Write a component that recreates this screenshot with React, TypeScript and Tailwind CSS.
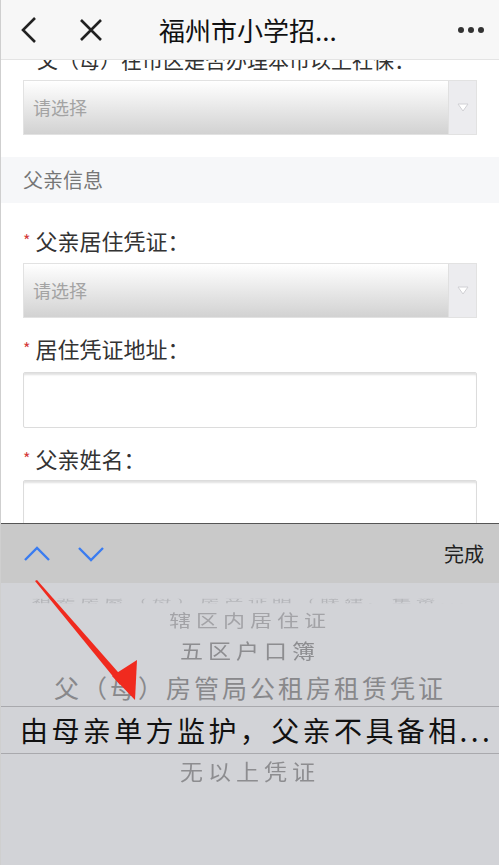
import React from "react";

const font = { fontFamily: '"Noto Sans CJK SC", "Noto Sans", sans-serif' };

function SelectBox() {
  return (
    <div className="mx-[22px] flex h-[55px] border border-[#e2e2e2]">
      <div className="flex flex-1 items-center bg-gradient-to-b from-[#ffffff] to-[#d2d2d2] pl-[9px] text-[18px] text-[#a3a3a3]">
        请选择
      </div>
      <div className="flex w-[28px] items-center justify-center border-l border-[#e0e0e0] bg-[#ececef]">
        <svg width="12" height="9" viewBox="0 0 12 9">
          <path d="M1 1 L11 1 L6 8 Z" fill="#ffffff" stroke="#d0d0d4" strokeWidth="1" />
        </svg>
      </div>
    </div>
  );
}

function InputBox() {
  return (
    <div className="mx-[22px] h-[56px] rounded-[2px] border border-[#dcdcdc] bg-white shadow-[inset_0_3px_2px_-1px_rgba(0,0,0,0.12)]" />
  );
}

function Label({ text, className }: { text: string; className?: string }) {
  return (
    <div className={`flex h-[28px] items-center px-[22px] text-[22px] text-[#333] ${className ?? ""}`}>
      <span className="mr-[5px] text-[16px] text-[#d43c3c]">*</span>
      {text}
    </div>
  );
}

export default function App() {
  return (
    <div className="relative flex h-[865px] w-[499px] flex-col overflow-hidden border-l border-[#cfcfcf] bg-white" style={font}>
      {/* header */}
      <div className="relative z-10 flex h-[60px] shrink-0 items-center border-b border-[#e4e4e4] bg-[#f7f7f7]">
        <div className="flex w-[150px] items-center gap-[40px] pl-[18px]">
          <svg width="20" height="28" viewBox="0 0 20 28">
            <path d="M16 2 L4 14 L16 26" fill="none" stroke="#222" strokeWidth="2.6" />
          </svg>
          <svg width="24" height="24" viewBox="0 0 24 24">
            <path d="M2 2 L22 22 M22 2 L2 22" fill="none" stroke="#222" strokeWidth="2.6" />
          </svg>
        </div>
        <div className="ml-[8px] flex-1 text-[26px] text-[#111]">福州市小学招...</div>
        <div className="flex gap-[4px] pr-[15px]">
          <span className="h-[6px] w-[6px] rounded-full bg-[#333]" />
          <span className="h-[6px] w-[6px] rounded-full bg-[#333]" />
          <span className="h-[6px] w-[6px] rounded-full bg-[#333]" />
        </div>
      </div>

      {/* form */}
      <div className="flex-1 overflow-hidden">
        <div className="-mt-[14px] flex h-[28px] items-center px-[36px] text-[21px] text-[#333]">
          父（母）在市区是否办理本市以上社保：
        </div>
        <div className="mt-[6px]">
          <SelectBox />
        </div>
        <div className="mt-[22px] flex h-[46px] items-center bg-[#f6f7f9] px-[22px] text-[20px] text-[#777]">
          父亲信息
        </div>
        <Label text="父亲居住凭证：" className="mt-[23px]" />
        <div className="mt-[9px]">
          <SelectBox />
        </div>
        <Label text="居住凭证地址：" className="mt-[16px]" />
        <div className="mt-[10px]">
          <InputBox />
        </div>
        <Label text="父亲姓名：" className="mt-[16px]" />
        <div className="mt-[8px]">
          <InputBox />
        </div>
      </div>

      {/* picker */}
      <div className="flex h-[60px] shrink-0 items-center border-t border-[#555] bg-[#c9c9c9] pl-[22px] pr-[15px]">
        <div className="flex items-center gap-[26px]">
          <svg width="28" height="18" viewBox="0 0 28 18">
            <path d="M2 15 L14 3 L26 15" fill="none" stroke="#3a7cf0" strokeWidth="2.4" />
          </svg>
          <svg width="28" height="18" viewBox="0 0 28 18">
            <path d="M2 3 L14 15 L26 3" fill="none" stroke="#3a7cf0" strokeWidth="2.4" />
          </svg>
        </div>
        <div className="ml-auto text-[20px] text-[#222]">完成</div>
      </div>
      <div className="flex h-[282px] shrink-0 flex-col bg-[#d2d3d7] pt-[13px]">
        <div className="h-[10px] overflow-hidden text-center text-[20px] leading-[10px] tracking-[4px] text-[#b5b6ba] blur-[0.6px] [transform:scaleY(0.45)]">
          祖辈房屋（母）房产证明（联建、集资...
        </div>
        <div className="mt-[2px] h-[22px] text-center text-[22px] leading-[22px] tracking-[5px] text-[#a3a3a7] [transform:scaleY(0.75)]">
          辖区内居住证
        </div>
        <div className="mt-[6px] h-[28px] text-center text-[23px] leading-[28px] tracking-[5px] text-[#8d8d90] [transform:scaleY(0.9)]">
          五区户口簿
        </div>
        <div className="mt-[4px] h-[38px] text-center text-[25px] leading-[38px] tracking-[3px] text-[#88888b]">
          父（母）房管局公租房租赁凭证
        </div>
        <div className="flex h-[48px] items-center overflow-hidden whitespace-nowrap border-y border-[#a9a9ad] pl-[19px] text-[28px] tracking-[3.4px] text-[#111]">
          由母亲单方监护，父亲不具备相...
        </div>
        <div className="h-[34px] text-center text-[23px] leading-[34px] tracking-[5px] text-[#8d8d90] [transform:scaleY(0.92)]">
          无以上凭证
        </div>
      </div>

      {/* annotation arrow */}
      <svg className="pointer-events-none absolute left-0 top-0" width="499" height="865" viewBox="0 0 499 865">
        <path d="M34 581 L36 580 L124 680 L119 685 Z" fill="#f02a1e" />
        <path d="M111 676 L136 660 L134 700 Z" fill="#f02a1e" />
      </svg>
    </div>
  );
}
